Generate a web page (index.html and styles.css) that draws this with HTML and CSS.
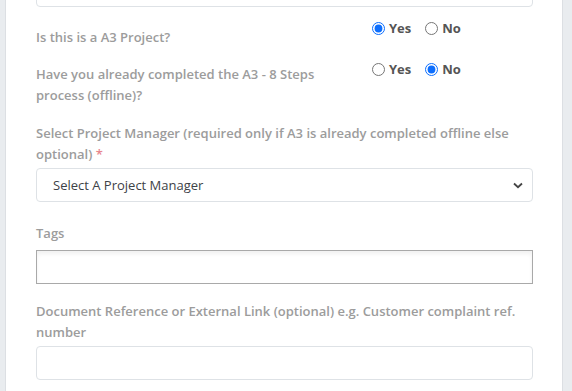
FILE: index.html
```html
<!DOCTYPE html>
<html lang="en">
<head>
    <meta charset="UTF-8">
    <meta name="viewport" content="width=device-width, initial-scale=1.0">
    <title>New Project</title>
    <link rel="stylesheet" href="styles.css">
</head>
<body>
    <div class="card">
        <div class="field-prev"></div>

        <div class="question q-a3">
            <label class="question-label">Is this is a A3 Project?</label>
            <div class="radios">
                <label class="radio"><input type="radio" name="isA3" checked> Yes</label>
                <label class="radio"><input type="radio" name="isA3"> No</label>
            </div>
        </div>

        <div class="question q-done">
            <label class="question-label">Have you already completed the A3 - 8 Steps process (offline)?</label>
            <div class="radios">
                <label class="radio"><input type="radio" name="done"> Yes</label>
                <label class="radio"><input type="radio" name="done" checked> No</label>
            </div>
        </div>

        <div class="form-group pm-group">
            <label class="field-label" for="pm">Select Project Manager (required only if A3 is already completed offline else optional) <span class="required">*</span></label>
            <div class="select-wrap">
                <select id="pm" class="form-control">
                    <option>Select A Project Manager</option>
                </select>
                <svg class="chevron" width="10" height="7" viewBox="0 0 10 7"><path d="M1 1.5 L5 5.2 L9 1.5" fill="none" stroke="#444" stroke-width="1.8"/></svg>
            </div>
        </div>

        <div class="form-group tags-group">
            <label class="field-label" for="tags">Tags</label>
            <input id="tags" type="text" class="tags-input">
        </div>

        <div class="form-group ref-group">
            <label class="field-label" for="ref">Document Reference or External Link (optional) e.g. Customer complaint ref. number</label>
            <input id="ref" type="text" class="form-control">
        </div>
    </div>
</body>
</html>
```

FILE: styles.css
```css
body {
    margin: 0;
    padding: 0 9px 0 5px;
    background-color: #e9ecef;
    font-family: "Open Sans", sans-serif;
}

.card {
    display: flow-root;
    box-sizing: border-box;
    min-height: 100vh;
    background-color: #fff;
    border-left: 1px solid #dcdfe3;
    border-right: 1px solid #dcdfe3;
    padding: 0 29px 0 30px;
}

.field-prev {
    height: 34px;
    margin-top: -29px;
    border: 1px solid #dee2e6;
    border-radius: 4px;
}

.question {
    display: flex;
    align-items: flex-start;
}

.question-label {
    width: 300px;
    margin-right: 36px;
    font-size: 13px;
    font-weight: 600;
    line-height: 21px;
    color: #9c9c9c;
}

.radios {
    display: flex;
    gap: 14px;
}

.q-a3 .question-label {
    padding-top: 20px;
}

.q-a3 .radios {
    padding-top: 12px;
}

.q-done .question-label {
    padding-top: 16px;
}

.q-done .radios {
    padding-top: 12px;
}

.radio {
    display: flex;
    align-items: center;
    font-size: 13px;
    font-weight: 700;
    color: #555;
}

.radio input {
    width: 13px;
    height: 13px;
    margin: 0 4px 0 0;
    accent-color: #0d6efd;
}

.field-label {
    display: block;
    font-size: 13px;
    font-weight: 600;
    line-height: 21px;
    color: #9c9c9c;
    margin-bottom: 3px;
}

.pm-group {
    margin-top: 17px;
}

.tags-group {
    margin-top: 21px;
}

.tags-group .field-label {
    margin-bottom: 6px;
}

.ref-group {
    margin-top: 17px;
}

.required {
    color: #e8868e;
}

.form-control {
    display: block;
    box-sizing: border-box;
    width: 100%;
    height: 34px;
    padding: 0 16px;
    border: 1px solid #dee2e6;
    border-radius: 4px;
    background-color: #fff;
    font-family: "Open Sans", sans-serif;
    font-size: 13px;
    color: #3d4247;
}

.select-wrap {
    position: relative;
}

select.form-control {
    appearance: none;
}

.chevron {
    position: absolute;
    right: 10px;
    top: 14px;
}

.tags-input {
    display: block;
    box-sizing: border-box;
    width: 100%;
    height: 34px;
    border: 1px solid #a9a9a9;
    border-radius: 0;
    box-shadow: inset 0 3px 4px rgba(0, 0, 0, 0.06);
}
```
